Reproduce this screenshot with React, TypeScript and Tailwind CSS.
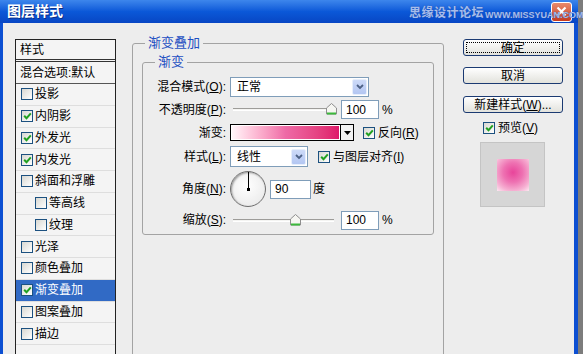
import React from "react";

function Check({ on }: { on?: boolean }) {
  return (
    <span className="inline-flex h-[12px] w-[12px] shrink-0 items-center justify-center border border-[#1c5180] bg-gradient-to-br from-[#d8d8d2] to-white">
      {on && (
        <svg width="9" height="8" viewBox="0 0 9 8">
          <path d="M1.2 3.8 L3.5 6.2 L7.8 1.4" stroke="#21a121" strokeWidth="2" fill="none" />
        </svg>
      )}
    </span>
  );
}

function Chevron() {
  return (
    <span className="mr-px flex h-[16px] w-[15px] items-center justify-center rounded-[2px] border border-[#e6eefc] bg-gradient-to-b from-[#cddaf8] to-[#b3c6f2]">
      <svg width="8" height="6" viewBox="0 0 8 6">
        <path d="M1 1 L4 4 L7 1" stroke="#4d6185" strokeWidth="1.8" fill="none" />
      </svg>
    </span>
  );
}

function Slider({ pos }: { pos: number }) {
  return (
    <div className="relative h-full w-[108px]">
      <div className="absolute left-[3px] right-[4px] top-[8px] h-[3px] border-t border-[#9d9c99] bg-[#f4f4f2] border-b border-b-white" />
      <svg className="absolute top-[3px]" style={{ left: pos }} width="11" height="12" viewBox="0 0 11 12">
        <polygon points="0.5,5 5.5,0.5 10.5,5 10.5,11 0.5,11" fill="#f6f6f2" stroke="#8e8e8e" />
        <line x1="1" y1="10.5" x2="10" y2="10.5" stroke="#3cb93c" strokeWidth="2" />
      </svg>
    </div>
  );
}

function Field({ v, w }: { v: string; w: string }) {
  return (
    <div className={`flex h-[19px] items-center border border-[#7f9db9] bg-white pl-[4px] ${w}`}>{v}</div>
  );
}

const items = [
  { t: "投影" },
  { t: "内阴影", on: true },
  { t: "外发光", on: true },
  { t: "内发光", on: true },
  { t: "斜面和浮雕" },
  { t: "等高线", sub: true },
  { t: "纹理", sub: true },
  { t: "光泽" },
  { t: "颜色叠加" },
  { t: "渐变叠加", on: true, sel: true },
  { t: "图案叠加" },
  { t: "描边" },
  { t: "" },
];

export default function App() {
  return (
    <div className='flex h-[354px] w-[583px] overflow-hidden bg-[#7c7c7c] font-["Liberation_Sans","Noto_Sans_CJK_SC",sans-serif] text-[12px] text-black'>
      <div className="flex w-[578px] flex-col">
        {/* title bar */}
        <div className="relative flex h-[23px] shrink-0 items-center bg-gradient-to-b from-[#3d86ec] via-[#0b58d8] to-[#0846c4]">
          <span className="pl-[7px] text-[14px] font-bold text-white [text-shadow:1px_1px_0_#0a2f8a]">图层样式</span>
          <span className="absolute left-[409px] top-[4px] text-[12px] font-bold tracking-[0.5px] text-[#a6bdec] [text-shadow:0_0_1px_#2a4fa0]">
            思缘设计论坛
          </span>
          <div className="flex-1" />
          <span className="mr-[6px] flex h-[20px] w-[21px] items-center justify-center rounded-[3px] border border-white bg-gradient-to-b from-[#e88a6c] to-[#c8391b]">
            <svg width="11" height="11" viewBox="0 0 11 11">
              <path d="M1.5 1.5 L9.5 9.5 M9.5 1.5 L1.5 9.5" stroke="white" strokeWidth="2.2" />
            </svg>
          </span>
          <span className="absolute left-[485px] top-[10px] z-10 text-[9px] font-bold leading-[10px] text-[#a6bdec] [text-shadow:0_0_1px_#2a4fa0]">
            WWW.MISSYUAN.COM
          </span>
        </div>

        {/* body */}
        <div className="flex flex-1">
          <div className="w-[3px] bg-[#0c4fd2]" />
          <div className="flex flex-1 bg-[#ededed] pl-[12px] pt-[12px]">
            {/* style list */}
            <div className="mt-[4px] h-[330px] w-[101px] shrink-0 border border-[#222] bg-[#f4f4f4]">
              <div className="flex h-[22px] items-center border-b-[3px] border-double border-[#333] pl-[4px]">样式</div>
              <div className="box-border flex h-[22px] items-center border-b border-[#555] pl-[4px]">混合选项:默认</div>
              {items.map((it, i) => (
                <div
                  key={i}
                  className={`box-border flex h-[21.75px] items-center gap-[2px] border-b border-[#dedede] ${
                    it.sub ? "pl-[19px]" : "pl-[5px]"
                  } ${it.sel ? "bg-[#316ac5] text-white" : ""}`}
                >
                  {it.t && <Check on={it.on} />}
                  <span>{it.t}</span>
                </div>
              ))}
            </div>

            {/* main group */}
            <fieldset className="ml-[16px] h-[330px] w-[311px] shrink-0 rounded-[3px] border border-[#a3a3a3] px-[9px] pt-[3px]">
              <legend className="ml-[3px] px-[3px] text-[13px] leading-[16px] text-[#1d4fc2]">渐变叠加</legend>
              <fieldset className="w-[292px] rounded-[3px] border border-[#a3a3a3] pb-[5px] pl-[12px]">
                <legend className="px-[3px] text-[13px] leading-[16px] text-[#1d4fc2]">渐变</legend>

                <div className="mt-[7px] flex h-[20px] items-center">
                  <span className="w-[71px] text-right">
                    混合模式(<u>O</u>):
                  </span>
                  <div className="ml-[4px] flex h-[20px] w-[139px] items-center border border-[#7f9db9] bg-white">
                    <span className="flex-1 pl-[6px]">正常</span>
                    <Chevron />
                  </div>
                </div>

                <div className="mt-[3px] flex h-[19px] items-center">
                  <span className="w-[71px] text-right">
                    不透明度(<u>P</u>):
                  </span>
                  <div className="ml-[4px] h-full">
                    <Slider pos={96} />
                  </div>
                  <Field v="100" w="ml-[3px] w-[38px]" />
                  <span className="ml-[3px]">%</span>
                </div>

                <div className="mt-[5px] flex h-[17px] items-center">
                  <span className="w-[71px] text-right">渐变:</span>
                  <div className="ml-[4px] flex h-[17px] w-[124px] border border-black">
                    <div className="flex-1 border border-white bg-gradient-to-r from-[#fff6fa] via-[#ee6aa6] to-[#de176a]" />
                    <div className="flex w-[13px] items-center justify-center border-l border-black bg-[#f2f2f2]">
                      <svg width="7" height="4" viewBox="0 0 7 4">
                        <polygon points="0,0 7,0 3.5,4" fill="black" />
                      </svg>
                    </div>
                  </div>
                  <span className="ml-[9px] flex items-center gap-[3px]">
                    <Check on />
                    <span>
                      反向(<u>R</u>)
                    </span>
                  </span>
                </div>

                <div className="mt-[5px] flex h-[21px] items-center">
                  <span className="w-[71px] text-right">
                    样式(<u>L</u>):
                  </span>
                  <div className="ml-[4px] flex h-[21px] w-[78px] items-center border border-[#7f9db9] bg-white">
                    <span className="flex-1 pl-[6px]">线性</span>
                    <Chevron />
                  </div>
                  <span className="ml-[10px] flex items-center gap-[3px]">
                    <Check on />
                    <span>
                      与图层对齐(<u>I</u>)
                    </span>
                  </span>
                </div>

                <div className="mt-[4px] flex h-[36px] items-center">
                  <span className="w-[71px] text-right">
                    角度(<u>N</u>):
                  </span>
                  <div className="relative ml-[4px] h-[36px] w-[36px] rounded-full border border-[#6f6f6f] bg-[radial-gradient(circle_at_45%_40%,#ffffff,#e6e6e6)] shadow-[inset_1px_1px_2px_#9a9a9a]">
                    <div className="absolute left-[16.5px] top-0 h-[17px] w-px bg-black" />
                    <div className="absolute left-[15.5px] top-[16px] h-[3px] w-[3px] bg-black" />
                  </div>
                  <Field v="90" w="ml-[4px] w-[41px]" />
                  <span className="ml-[2px]">度</span>
                </div>

                <div className="mt-[4px] flex h-[18px] items-center">
                  <span className="w-[71px] text-right">
                    缩放(<u>S</u>):
                  </span>
                  <div className="ml-[4px] h-full">
                    <Slider pos={60} />
                  </div>
                  <Field v="100" w="ml-[3px] w-[38px]" />
                  <span className="ml-[3px]">%</span>
                </div>
              </fieldset>
            </fieldset>

            {/* right column */}
            <div className="ml-[19px] mt-[4px] flex w-[100px] shrink-0 flex-col">
              <button className="h-[17px] rounded-[3px] border border-[#1b3a72] bg-gradient-to-b from-white to-[#e2e2dc] leading-none outline-1 outline-offset-[-4px] outline-dotted outline-black">
                确定
              </button>
              <button className="mt-[11px] h-[17px] rounded-[3px] border border-[#1b3a72] bg-gradient-to-b from-white to-[#e2e2dc] leading-none">
                取消
              </button>
              <button className="mt-[12px] h-[17px] rounded-[3px] border border-[#1b3a72] bg-gradient-to-b from-white to-[#e2e2dc] leading-none">
                新建样式(<u>W</u>)...
              </button>
              <div className="mt-[8px] flex h-[14px] items-center gap-[3px] pl-[20px]">
                <Check on />
                <span>
                  预览(<u>V</u>)
                </span>
              </div>
              <div className="ml-[17px] mt-[7px] flex h-[65px] w-[65px] items-center justify-center border border-[#c4c4c4] bg-[#d6d6d6]">
                <div className="h-[32px] w-[32px] bg-[radial-gradient(circle_at_50%_42%,#e8449a_0%,#ee72b2_40%,#f6b0d2_75%,#fde8f2_100%)]" />
              </div>
            </div>
          </div>
          <div className="w-[4px] bg-[#0c4fd2]" />
        </div>
      </div>
    </div>
  );
}
